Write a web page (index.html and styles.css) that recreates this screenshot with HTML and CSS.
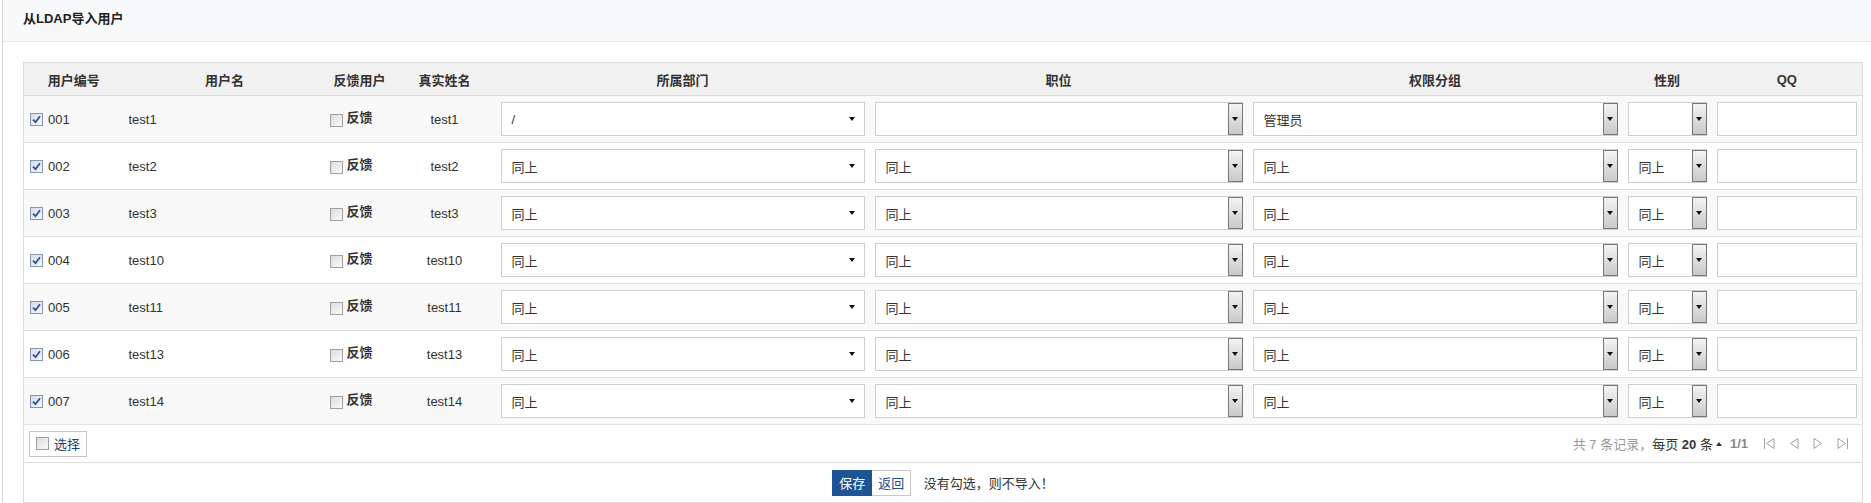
FILE: index.html
```html
<!DOCTYPE html>
<html lang="zh">
<head>
    <meta charset="UTF-8">
    <title>从LDAP导入用户</title>
    <link rel="stylesheet" href="styles.css">
</head>
<body>
<div class="page">
    <div class="title-bar">从LDAP导入用户</div>

    <div class="content">
        <table class="grid">
            <colgroup>
                <col style="width:100px"><col style="width:202px"><col style="width:68px">
                <col style="width:102px"><col style="width:374px"><col style="width:378px">
                <col style="width:375px"><col style="width:89px"><col style="width:151px">
            </colgroup>
            <thead>
                <tr>
                    <th>用户编号</th><th>用户名</th><th>反馈用户</th><th>真实姓名</th>
                    <th>所属部门</th><th>职位</th><th>权限分组</th><th>性别</th><th>QQ</th>
                </tr>
            </thead>
            <tbody id="rows"></tbody>
            <tfoot>
                <tr class="pager-row">
                    <td colspan="9">
                        <div class="pager">
                            <span class="pick-btn"><span class="cb"></span>选择</span>
                            <div class="pager-info">
                                <span class="muted">共 7 条记录，</span>
                                <span>每页 <b>20</b> 条</span><span class="up"></span>
                                <b class="muted pages">1/1</b>
                                <span class="nav">
                                    <svg width="12" height="13" viewBox="0 0 12 13"><path d="M1.5 1v11M11 1.5L3.5 6.5 11 11.5z" fill="none" stroke="#a3a3a3"/></svg>
                                    <svg width="10" height="13" viewBox="0 0 10 13"><path d="M9 1.5L1.5 6.5 9 11.5z" fill="none" stroke="#a3a3a3"/></svg>
                                    <svg width="10" height="13" viewBox="0 0 10 13"><path d="M1 1.5L8.5 6.5 1 11.5z" fill="none" stroke="#a3a3a3"/></svg>
                                    <svg width="12" height="13" viewBox="0 0 12 13"><path d="M10.5 1v11M1 1.5L8.5 6.5 1 11.5z" fill="none" stroke="#a3a3a3"/></svg>
                                </span>
                            </div>
                        </div>
                    </td>
                </tr>
                <tr class="action-row">
                    <td colspan="9">
                        <button class="btn save">保存</button><button class="btn back">返回</button>
                        <span class="hint">没有勾选，则不导入！</span>
                    </td>
                </tr>
            </tfoot>
        </table>
    </div>
</div>

<script>
    const users = [
        {no: '001', name: 'test1', real: 'test1'},
        {no: '002', name: 'test2', real: 'test2'},
        {no: '003', name: 'test3', real: 'test3'},
        {no: '004', name: 'test10', real: 'test10'},
        {no: '005', name: 'test11', real: 'test11'},
        {no: '006', name: 'test13', real: 'test13'},
        {no: '007', name: 'test14', real: 'test14'}
    ];
    const check = '<span class="cb on"><svg width="11" height="11" viewBox="0 0 11 11"><path d="M2 5.6L4.5 8.2 9 2.2" fill="none" stroke="#2c4f9e" stroke-width="1.8"/></svg></span>';

    const tbody = document.getElementById('rows');
    users.forEach((u, i) => {
        const first = i === 0;
        const tr = document.createElement('tr');
        tr.innerHTML = `
            <td class="no">${check}${u.no}</td>
            <td>${u.name}</td>
            <td class="fb"><span class="cb"></span><b>反馈</b></td>
            <td class="center">${u.real}</td>
            <td><div class="sel"><span>${first ? '/' : '同上'}</span><i class="caret"></i></div></td>
            <td><div class="sel"><span>${first ? '' : '同上'}</span><i class="drop"><i class="caret"></i></i></div></td>
            <td><div class="sel"><span>${first ? '管理员' : '同上'}</span><i class="drop"><i class="caret"></i></i></div></td>
            <td><div class="sel"><span>${first ? '' : '同上'}</span><i class="drop"><i class="caret"></i></i></div></td>
            <td><div class="qq"></div></td>`;
        tbody.appendChild(tr);
    });
</script>
</body>
</html>
```

FILE: styles.css
```css
body {
    margin: 0;
    padding-left: 2px;
    font-family: "Liberation Sans", "Noto Sans CJK SC", sans-serif;
    font-size: 13px;
    color: #333;
    background: #fff;
}
.page {
    border-left: 1px solid #d4d4d4;
    min-height: 503px;
}
.title-bar {
    height: 41px;
    line-height: 38px;
    padding-left: 20px;
    background: #f8f9fb;
    border-bottom: 1px solid #e6e6e6;
    font-weight: bold;
    color: #222;
}
.content {
    padding: 20px 9px 0 20px;
}
.grid {
    width: 100%;
    table-layout: fixed;
    border-collapse: collapse;
    border: 1px solid #dcdcdc;
}
.grid th {
    height: 32px;
    background: #f1f1f1;
    border-bottom: 1px solid #dcdcdc;
    font-weight: bold;
    color: #333;
    padding: 0;
}
.grid tbody td {
    padding: 6px 5px;
    height: 34px;
    border-bottom: 1px solid #e2e2e2;
    white-space: nowrap;
}
.grid tbody tr:nth-child(odd) td {
    background: #f9f9f9;
}
.grid td.center {
    text-align: center;
}
.grid td.no {
    padding-left: 6px;
}
.grid td.fb {
    padding-left: 4px;
}
.grid td.fb b {
    position: relative;
    top: -3px;
    margin-left: 4px;
}
.cb {
    display: inline-block;
    box-sizing: border-box;
    width: 13px;
    height: 13px;
    border: 1px solid #a0a0a0;
    background: linear-gradient(135deg, #dcdcdc, #fbfbfb);
    vertical-align: -2px;
    position: relative;
}
.cb.on {
    border-color: #8797b3;
    background: linear-gradient(135deg, #d5dde9, #f6f8fb);
    margin-right: 5px;
}
.cb.on svg {
    position: absolute;
    left: 0;
    top: 0;
}
.sel {
    display: flex;
    align-items: center;
    box-sizing: border-box;
    height: 34px;
    border: 1px solid #cfcfcf;
    background: #fff;
    padding-left: 10px;
}
.sel span {
    flex: 1;
}
.caret {
    display: block;
    width: 0;
    height: 0;
    border-left: 3.5px solid transparent;
    border-right: 3.5px solid transparent;
    border-top: 4px solid #111;
    margin-right: 9px;
}
.drop {
    display: flex;
    align-items: center;
    justify-content: center;
    align-self: stretch;
    box-sizing: border-box;
    width: 15px;
    margin: 0 -1px 0 0;
    border: 1px solid #777;
    background: linear-gradient(#f4f4f4, #c9c9c9);
}
.drop .caret {
    margin: 0;
    border-left-width: 3px;
    border-right-width: 3px;
    border-top-width: 4px;
}
.qq {
    box-sizing: border-box;
    height: 34px;
    border: 1px solid #cfcfcf;
    background: #fff;
}
.pager-row td {
    height: 37px;
    padding: 0 13px 0 5px;
    border-bottom: 1px solid #dcdcdc;
}
.pager {
    display: flex;
    justify-content: space-between;
    align-items: center;
}
.pick-btn {
    display: inline-flex;
    align-items: center;
    box-sizing: border-box;
    height: 26px;
    padding: 0 6px;
    border: 1px solid #c8c8c8;
    background: #fff;
    color: #1f3f6e;
}
.pick-btn .cb {
    margin-right: 5px;
}
.pager-info {
    display: flex;
    align-items: center;
    color: #333;
}
.muted {
    color: #999;
}
.up {
    width: 0;
    height: 0;
    margin: 0 8px 0 3px;
    border-left: 3px solid transparent;
    border-right: 3px solid transparent;
    border-bottom: 4px solid #333;
}
.pages {
    font-weight: bold;
    color: #888;
    margin-right: 15px;
}
.nav {
    display: flex;
    gap: 14px;
}
.action-row td {
    height: 39px;
    text-align: center;
    padding: 0;
}
.btn {
    height: 26px;
    padding: 0 6px;
    font: inherit;
    border: 1px solid #c8c8c8;
    background: #fff;
    color: #1f4f8f;
    vertical-align: middle;
    cursor: pointer;
}
.btn.save {
    background: #1e5494;
    border-color: #1e5494;
    color: #fff;
}
.btn.back {
    border-left: none;
}
.hint {
    margin-left: 9px;
    vertical-align: middle;
}
```
